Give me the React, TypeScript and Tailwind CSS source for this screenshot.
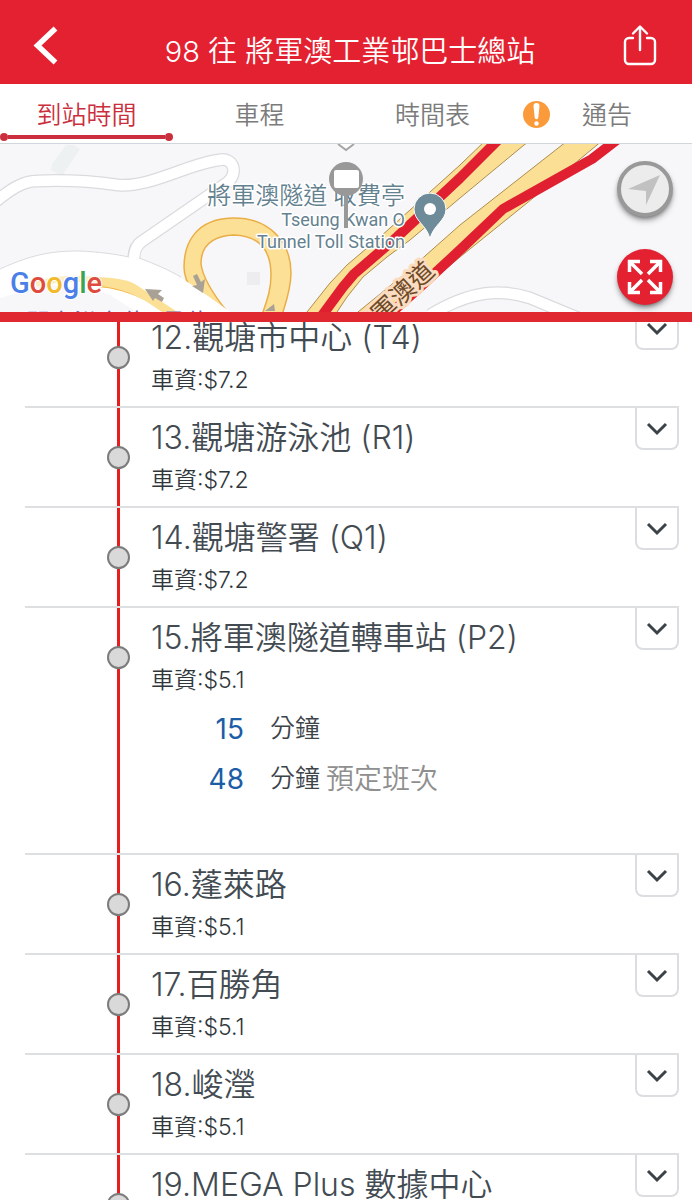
import { ReactNode } from 'react';

interface Arrival {
  minutes: number;
  note?: string;
}

interface Stop {
  name: string;
  fare: string;
  arrivals?: Arrival[];
}

const TABS = ['到站時間', '車程', '時間表', '通告'];

const STOPS: Stop[] = [
  { name: '12.觀塘市中心 (T4)', fare: '7.2' },
  { name: '13.觀塘游泳池 (R1)', fare: '7.2' },
  { name: '14.觀塘警署 (Q1)', fare: '7.2' },
  {
    name: '15.將軍澳隧道轉車站 (P2)',
    fare: '5.1',
    arrivals: [{ minutes: 15 }, { minutes: 48, note: '預定班次' }],
  },
  { name: '16.蓬萊路', fare: '5.1' },
  { name: '17.百勝角', fare: '5.1' },
  { name: '18.峻瀅', fare: '5.1' },
  { name: '19.MEGA Plus 數據中心', fare: '5.1' },
];

function Header() {
  return (
    <header className="flex h-21 shrink-0 items-center justify-between bg-[#e42130] px-6 pt-2 text-white">
      <button type="button" aria-label="返回" className="flex w-16 justify-start pl-2">
        <svg width="28" height="44" viewBox="0 0 28 44" fill="none" stroke="currentColor" strokeWidth="5.500">
          <path d="M23.500 4.500 5.500 21.500 23.500 38.500" />
        </svg>
      </button>
      <h1 className="pt-3 text-[29px] leading-8">98 往 將軍澳工業邨巴士總站</h1>
      <button type="button" aria-label="分享" className="flex w-14 justify-center">
        <svg
          width="36"
          height="44"
          viewBox="0 0 36 44"
          fill="none"
          stroke="currentColor"
          strokeWidth="2.400"
          strokeLinecap="round"
          strokeLinejoin="round"
        >
          <path d="M11 14H7a4 4 0 0 0-4 4v18a4 4 0 0 0 4 4h22a4 4 0 0 0 4-4V18a4 4 0 0 0-4-4h-4" />
          <path d="M18 26V3M11 9.500 18 2.500l7 7" />
        </svg>
      </button>
    </header>
  );
}

function AlertIcon() {
  return (
    <svg width="27" height="27" viewBox="0 0 27 27" aria-hidden="true">
      <circle cx="13.500" cy="13.500" r="13.500" fill="#fb9a3a" />
      <path d="M10.500 5a3 3 0 0 1 6 0l-1.200 11.500a1.800 1.800 0 0 1-3.600 0z" fill="#fff" />
      <circle cx="13.500" cy="22.500" r="2.200" fill="#fff" />
    </svg>
  );
}

function TabBar() {
  return (
    <nav className="grid h-15 shrink-0 grid-cols-4 border-b border-gray-300 bg-white text-[25px] leading-8 text-[#7b7b7b]">
      {TABS.map((tab, i) => (
        <a
          key={tab}
          href="#"
          className={
            i === 0
              ? 'flex flex-col items-center justify-between pt-[15px] text-[#cb2f3e]'
              : i === 3
                ? 'flex items-start justify-center gap-8 pt-[15px] pr-14'
                : 'flex items-start justify-center pt-[15px]'
          }
        >
          {i === 3 && (
            <span className="pt-0.5">
              <AlertIcon />
            </span>
          )}
          {tab}
          {i === 0 && (
            <span className="mb-0.5 flex w-full items-center">
              <span className="size-2 rounded-full bg-[#cb2f3e]" />
              <span className="h-1 flex-1 bg-[#cb2f3e]" />
              <span className="size-2 rounded-full bg-[#cb2f3e]" />
            </span>
          )}
        </a>
      ))}
    </nav>
  );
}

function RouteMap() {
  return (
    <svg
      className="block h-42 w-full"
      viewBox="0 -1 692 168"
      preserveAspectRatio="xMidYMid slice"
      role="img"
      aria-label="地圖"
    >
      <rect y="-1" width="692" height="170" fill="#f7f7fa" />
      <path d="M66 0h8l6 4-18 27-11-6 1-6z" fill="#edf1f1" />
      <rect x="247" y="127" width="13" height="13" fill="#ededef" />

      {/* minor roads */}
      <g fill="none" strokeLinejoin="round">
        <g stroke="#dadbde" strokeWidth="13">
          <path d="M-5 57C10 45 22 36 37 36C60 35 90 36 118 40C150 43 190 18 219 15C234 12 238 28 228 37L141 97Q133 103 134 116" />
          <path d="M430 170C470 146 500 143 530 153L600 182" />
        </g>
        <g stroke="#fff" strokeWidth="10.500">
          <path d="M-5 57C10 45 22 36 37 36C60 35 90 36 118 40C150 43 190 18 219 15C234 12 238 28 228 37L141 97Q133 103 134 120" />
          <path d="M430 170C470 146 500 143 530 153L600 182" />
        </g>
      </g>

      {/* tunnel loop */}
      <path
        d="M184 122C184 98 196 74 232 73C268 72 291 96 291 128C291 142 287 155 282 170H262C267 155 271 145 271 130C271 108 262 91 234 90C212 91 201 101 201 119C203 134 215 152 230 170H215C198 155 184 140 184 122Z"
        fill="#fce095"
        stroke="#eaae49"
        strokeWidth="1.500"
      />

      {/* trunk road beside the slip lanes */}
      <path d="M0 124C35 108 55 106 80 106C105 107 125 111 139 113C180 128 200 146 232 168H0Z" fill="#fff" />
      <path d="M0 124C35 108 55 106 80 106C100 107 115 109 129 112M139 113C155 119 169 125 181 132" fill="none" stroke="#dadbde" />
      <path d="M0 153 45 140 90 143 110 150 138 168H0Z" fill="#f7f7fa" />
      <path d="M129 112h10v7h-10z" fill="#fff" />
      <path d="M36 139C60 133 80 132 102 136" fill="none" stroke="#fdeec4" strokeWidth="6" />
      <path d="M98 141C115 142 130 147 145 154L166 168" fill="none" stroke="#f0b74a" strokeWidth="2" />
      <path d="M98 132C118 133 130 135 138 141L182 170H166C150 157 125 142 98 141Z" fill="#fce095" />
      <g fill="#a9a196">
        <path d="m145 144 17 1-4 4 6 4-2 4-7-4-2 3z" />
        <path d="m203 148-11-7 5-1-4-9 4-2 4 8 4-3z" />
        <path d="m274 159-9 7h10z" />
      </g>

      {/* dual carriageway */}
      <g fill="#fbdf95" stroke="#ad8d4d">
        <path d="M300 178 307 167 330 138 347 120 380 92 460 20 487-6H532L524 0 460 53 410 95 387 112 363 132 347 152 337 167 330 178Z" />
        <path d="M345 178 358 167 407 127 460 80 562 0 570-6H604L597 0 527 58 460 112 395 167 382 178Z" />
      </g>
      <g fill="none" stroke="#e01f30" strokeWidth="10" strokeLinejoin="round">
        <path d="M318 176 343 142 354 129 397 92 460 33 498-5" />
        <path d="M380 178 420 142 460 105 503 64 592 14 618-6" />
      </g>

      <text
        transform="translate(363 196) rotate(-43)"
        className="font-['Noto_Sans_CJK_TC',sans-serif] text-[25px] font-normal"
        fill="#6d4a28"
        stroke="#fbdcc0"
        strokeWidth="6"
        strokeLinejoin="round"
        paintOrder="stroke"
      >
        將軍澳道
      </text>
      <text x="2" y="186" className="text-[24px] font-normal" fill="#7566b0">
        天開京沿京位 (昌位
      </text>

      {/* place label */}
      <g
        className="font-[Roboto,'Noto_Sans_CJK_TC',sans-serif] font-normal"
        fill="#64818f"
        stroke="#fff"
        strokeWidth="3"
        strokeLinejoin="round"
        paintOrder="stroke"
        textAnchor="end"
      >
        <text x="405" y="59" className="text-[24px] font-[350]">
          將軍澳隧道 收費亭
        </text>
        <text x="405" y="81" className="text-[18px]">
          Tseung Kwan O
        </text>
        <text x="405" y="103" className="text-[18px]">
          Tunnel Toll Station
        </text>
      </g>
      <path d="M430 94C427 80 414 76 414 64a16 16 0 0 1 32 0C446 76 433 80 430 94Z" fill="#6d8b99" stroke="#fff" />
      <circle cx="430" cy="64" r="6" fill="#fff" />

      {/* bus stop marker */}
      <path d="m338-1 8 6 8-6" fill="#fff" stroke="#a5a5a5" strokeWidth="2" />
      <path d="M344 46h4v37h-4z" fill="#989898" />
      <circle cx="346" cy="34" r="17" fill="#989898" />
      <rect x="334" y="25" width="25" height="18" rx="2" fill="#fff" />

      <text
        x="10"
        y="148"
        className="font-[Roboto,sans-serif] text-[29px] font-medium"
        stroke="#fff"
        strokeWidth="2"
        paintOrder="stroke"
      >
        <tspan fill="#4c80e8">G</tspan>
        <tspan fill="#de4c3e">o</tspan>
        <tspan fill="#f3b92c">o</tspan>
        <tspan fill="#4c80e8">g</tspan>
        <tspan fill="#3aa356">l</tspan>
        <tspan fill="#de4c3e">e</tspan>
      </text>
    </svg>
  );
}

function MapButton({ label, className, children }: { label: string; className: string; children: ReactNode }) {
  return (
    <button
      type="button"
      aria-label={label}
      className={`flex size-14 items-center justify-center rounded-full shadow-md shadow-black/40 ${className}`}
    >
      {children}
    </button>
  );
}

function MapPanel() {
  return (
    <section className="relative z-10 shrink-0 border-b-10 border-[#e02831]">
      <RouteMap />
      <div className="absolute top-[17px] right-[19px] flex flex-col gap-8">
        <MapButton label="定位" className="border-4 border-[#999999] bg-[#ececec]">
          <svg width="36" height="36" viewBox="0 0 36 36" fill="#c1c1c1">
            <path d="M33 4 19 34V20L1 18Z" />
          </svg>
        </MapButton>
        <MapButton label="全螢幕" className="bg-[#e42130] text-white">
          <svg width="36" height="36" viewBox="0 0 36 36" fill="none" stroke="currentColor" strokeWidth="3.500">
            <path d="M2.500 13V2.500H13M3 3l12 12" />
            <path d="M23 2.500h10.500V13M33 3 21 15" />
            <path d="M2.500 23v10.500H13M3 33l12-12" />
            <path d="M23 33.500h10.500V23M33 33 21 21" />
          </svg>
        </MapButton>
      </div>
    </section>
  );
}

function StopRow({ stop }: { stop: Stop }) {
  return (
    <li className="flex min-h-25 border-b-2 border-[#dedfe1]">
      <div className="relative flex w-[187px] shrink-0 justify-center pt-[38px]">
        <span className="absolute inset-y-0 w-[3px] bg-[#e61e1e]" />
        <span className="relative size-[23px] rounded-full border-2 border-[#7c7c7c] bg-[#d9d9d9]" />
      </div>
      <div className="-ml-[61px] min-w-0 flex-1">
        <h2 className="pt-2 text-[32px] leading-11 text-[#434b52]">{stop.name}</h2>
        <p className="pt-1 text-[23px] leading-8 text-[#30373c]">車資:${stop.fare}</p>
        {stop.arrivals && (
          <ul className="mt-2 pb-[49px]">
            {stop.arrivals.map((arrival) => (
              <li key={arrival.minutes} className="flex h-[50px] items-center text-[25px] text-[#3c4349]">
                <span className="w-[93px] text-right text-[28px] font-normal text-[#1c5da6]">{arrival.minutes}</span>
                <span className="pl-[26px]">分鐘</span>
                {arrival.note && <span className="pl-1.5 text-[28px] text-[#8f8f8f]">{arrival.note}</span>}
              </li>
            ))}
          </ul>
        )}
      </div>
      <button
        type="button"
        aria-label={`展開 ${stop.name}`}
        className="flex h-[42px] w-11 shrink-0 items-center justify-center rounded-b-lg border-2 border-t-0 border-[#dcdde0] pt-0.5 text-[#3b4248]"
      >
        <svg width="22" height="14" viewBox="0 0 22 14" fill="none" stroke="currentColor" strokeWidth="3">
          <path d="m2 2 9 9 9-9" />
        </svg>
      </button>
    </li>
  );
}

export default function App() {
  return (
    <div className="flex h-screen flex-col overflow-hidden bg-white font-[Inter,'Noto_Sans_CJK_TC',sans-serif] font-[350]">
      <Header />
      <TabBar />
      <MapPanel />
      <main className="min-h-0 flex-1 overflow-hidden">
        {/* list is scrolled part of the way under the map */}
        <ul className="-mt-3.5 pr-[13px] pl-[25px]">
          {STOPS.map((stop) => (
            <StopRow key={stop.name} stop={stop} />
          ))}
        </ul>
      </main>
    </div>
  );
}
